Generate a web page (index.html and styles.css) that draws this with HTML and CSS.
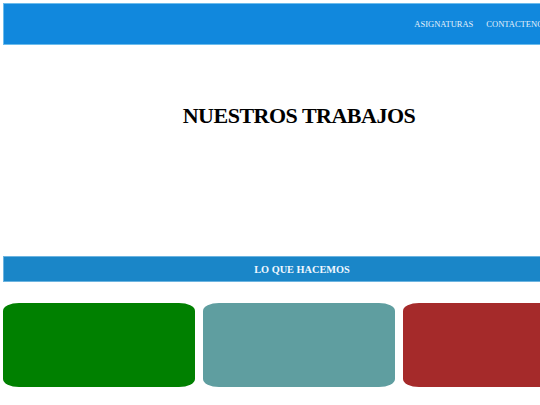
FILE: index.html
```html
<!DOCTYPE html>
<html lang="es">
<head>
<meta charset="utf-8">
<title>Nuestros trabajos</title>
<link rel="stylesheet" href="styles.css">
</head>
<body>
<div class="page">
  <header class="topbar">
    <nav class="nav">
      <a class="nav-link" href="#">ASIGNATURAS</a>
      <a class="nav-link" href="#">CONTACTENOS</a>
    </nav>
  </header>
  <section class="hero">
    <h1 class="hero-title">NUESTROS TRABAJOS</h1>
  </section>
  <div class="section-bar">LO QUE HACEMOS</div>
  <div class="cards">
    <div class="card card-green"></div>
    <div class="card card-teal"></div>
    <div class="card card-red"></div>
  </div>
</div>
</body>
</html>
```

FILE: styles.css
```css
html, body {
  margin: 0;
  padding: 0;
  background: #ffffff;
  overflow: hidden;
}
body {
  font-family: "Liberation Serif", "Times New Roman", serif;
  padding: 3px;
}
.page {
  width: 592px;
}
.topbar {
  height: 40px;
  background: #1188dd;
  border: 1px solid #6cbcec;
  display: flex;
  align-items: center;
  justify-content: flex-end;
}
.nav {
  display: flex;
  gap: 13px;
  padding-right: 46px;
}
.nav-link {
  color: #e3f1fb;
  text-decoration: none;
  font-size: 8.5px;
}
.hero {
  height: 211px;
  display: flex;
  justify-content: center;
  padding-top: 56px;
  box-sizing: border-box;
}
.hero-title {
  margin: 0;
  font-size: 22px;
  letter-spacing: -0.5px;
  font-weight: bold;
  color: #000;
  line-height: 30px;
}
.section-bar {
  height: 24px;
  background: #1a86c8;
  border: 1px solid #6cb4e0;
  color: #f0f8ff;
  font-weight: bold;
  font-size: 10.3px;
  display: flex;
  align-items: center;
  justify-content: center;
  padding-left: 6px;
}
.cards {
  margin-top: 21px;
  display: flex;
  gap: 8px;
}
.card {
  width: 192px;
  height: 84px;
  border-radius: 16px / 8px;
}
.card-green { background: #008000; }
.card-teal { background: #5f9ea0; }
.card-red { background: #a52a2a; }
```
